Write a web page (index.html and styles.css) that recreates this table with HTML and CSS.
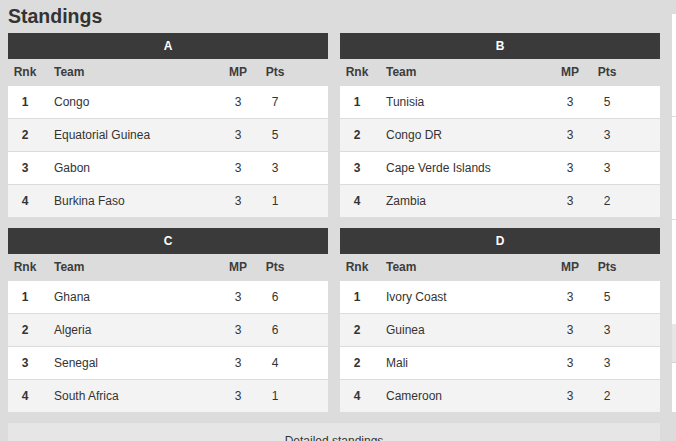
FILE: index.html
```html
<!DOCTYPE html>
<html>
<head>
<meta charset="utf-8">
<link rel="stylesheet" href="styles.css">
</head>
<body>
<div class="page">
  <main class="main">
    <h1 class="title">Standings</h1>
    <div class="groups">
      <section class="group">
        <div class="group-head">A</div>
        <div class="row labels"><span class="c-rank">Rnk</span><span class="c-team">Team</span><span class="c-num">MP</span><span class="c-num">Pts</span></div>
        <div class="row"><span class="c-rank">1</span><span class="c-team">Congo</span><span class="c-num">3</span><span class="c-num">7</span></div>
        <div class="row alt"><span class="c-rank">2</span><span class="c-team">Equatorial Guinea</span><span class="c-num">3</span><span class="c-num">5</span></div>
        <div class="row"><span class="c-rank">3</span><span class="c-team">Gabon</span><span class="c-num">3</span><span class="c-num">3</span></div>
        <div class="row alt last"><span class="c-rank">4</span><span class="c-team">Burkina Faso</span><span class="c-num">3</span><span class="c-num">1</span></div>
      </section>
      <section class="group">
        <div class="group-head">B</div>
        <div class="row labels"><span class="c-rank">Rnk</span><span class="c-team">Team</span><span class="c-num">MP</span><span class="c-num">Pts</span></div>
        <div class="row"><span class="c-rank">1</span><span class="c-team">Tunisia</span><span class="c-num">3</span><span class="c-num">5</span></div>
        <div class="row alt"><span class="c-rank">2</span><span class="c-team">Congo DR</span><span class="c-num">3</span><span class="c-num">3</span></div>
        <div class="row"><span class="c-rank">3</span><span class="c-team">Cape Verde Islands</span><span class="c-num">3</span><span class="c-num">3</span></div>
        <div class="row alt last"><span class="c-rank">4</span><span class="c-team">Zambia</span><span class="c-num">3</span><span class="c-num">2</span></div>
      </section>
      <section class="group">
        <div class="group-head">C</div>
        <div class="row labels"><span class="c-rank">Rnk</span><span class="c-team">Team</span><span class="c-num">MP</span><span class="c-num">Pts</span></div>
        <div class="row"><span class="c-rank">1</span><span class="c-team">Ghana</span><span class="c-num">3</span><span class="c-num">6</span></div>
        <div class="row alt"><span class="c-rank">2</span><span class="c-team">Algeria</span><span class="c-num">3</span><span class="c-num">6</span></div>
        <div class="row"><span class="c-rank">3</span><span class="c-team">Senegal</span><span class="c-num">3</span><span class="c-num">4</span></div>
        <div class="row alt last"><span class="c-rank">4</span><span class="c-team">South Africa</span><span class="c-num">3</span><span class="c-num">1</span></div>
      </section>
      <section class="group">
        <div class="group-head">D</div>
        <div class="row labels"><span class="c-rank">Rnk</span><span class="c-team">Team</span><span class="c-num">MP</span><span class="c-num">Pts</span></div>
        <div class="row"><span class="c-rank">1</span><span class="c-team">Ivory Coast</span><span class="c-num">3</span><span class="c-num">5</span></div>
        <div class="row alt"><span class="c-rank">2</span><span class="c-team">Guinea</span><span class="c-num">3</span><span class="c-num">3</span></div>
        <div class="row"><span class="c-rank">2</span><span class="c-team">Mali</span><span class="c-num">3</span><span class="c-num">3</span></div>
        <div class="row alt last"><span class="c-rank">4</span><span class="c-team">Cameroon</span><span class="c-num">3</span><span class="c-num">2</span></div>
      </section>
    </div>
    <div class="more">Detailed standings</div>
  </main>
  <aside class="side">
    <div class="side-block b1"></div>
    <div class="side-block b2"></div>
    <div class="side-block b3"></div>
    <div class="side-grey"></div>
    <div class="side-block b4"></div>
  </aside>
</div>
</body>
</html>
```

FILE: styles.css
```css
html, body {
  margin: 0;
  padding: 0;
  background: #dcdcdc;
  overflow: hidden;
}
body {
  font-family: "Liberation Sans", Arial, sans-serif;
  font-size: 12px;
  color: #333;
}
.page {
  display: flex;
  gap: 12px;
  padding: 0 0 0 8px;
  width: 676px;
  box-sizing: border-box;
  overflow: hidden;
}
.main {
  flex: 0 0 652px;
}
.title {
  margin: 0 0 5px;
  padding-top: 4px;
  font-size: 19.5px;
  line-height: 24px;
  font-weight: bold;
  color: #333;
}
.groups {
  display: grid;
  grid-template-columns: 320px 320px;
  column-gap: 12px;
  row-gap: 11px;
}
.group-head {
  background: #3a3a3a;
  color: #fff;
  font-weight: bold;
  text-align: center;
  height: 26px;
  line-height: 26px;
}
.row {
  display: grid;
  grid-template-columns: 34px 176px 40px 34px 1fr;
  height: 32px;
  line-height: 32px;
  background: #fff;
  border-bottom: 1px solid #dcdcdc;
}
.row.alt {
  background: #f3f3f3;
}
.row.last {
  border-bottom: 0;
}
.row.labels {
  background: transparent;
  height: 27px;
  line-height: 27px;
  border-bottom: 0;
  font-weight: bold;
  color: #3d3d3d;
}
.c-rank {
  text-align: center;
  font-weight: bold;
  color: #333;
}
.labels .c-rank {
  color: #3d3d3d;
}
.c-team {
  padding-left: 12px;
  white-space: nowrap;
}
.c-num {
  text-align: center;
}
.more {
  margin-top: 11px;
  background: #e6e6e6;
  text-align: center;
  padding: 10px 0;
  line-height: 16px;
  color: #333;
}
.side {
  flex: 0 0 4px;
  margin-top: 14px;
  display: flex;
  flex-direction: column;
}
.side-block {
  background: #fff;
}
.b1 { height: 102px; border-bottom: 1px solid #dcdcdc; }
.b2 { height: 102px; border-bottom: 1px solid #dcdcdc; }
.b3 { height: 104px; }
.side-grey { height: 38px; background: #e6e6e6; border-bottom: 1px solid #d4d4d4; }
.b4 { height: 49px; }
```
